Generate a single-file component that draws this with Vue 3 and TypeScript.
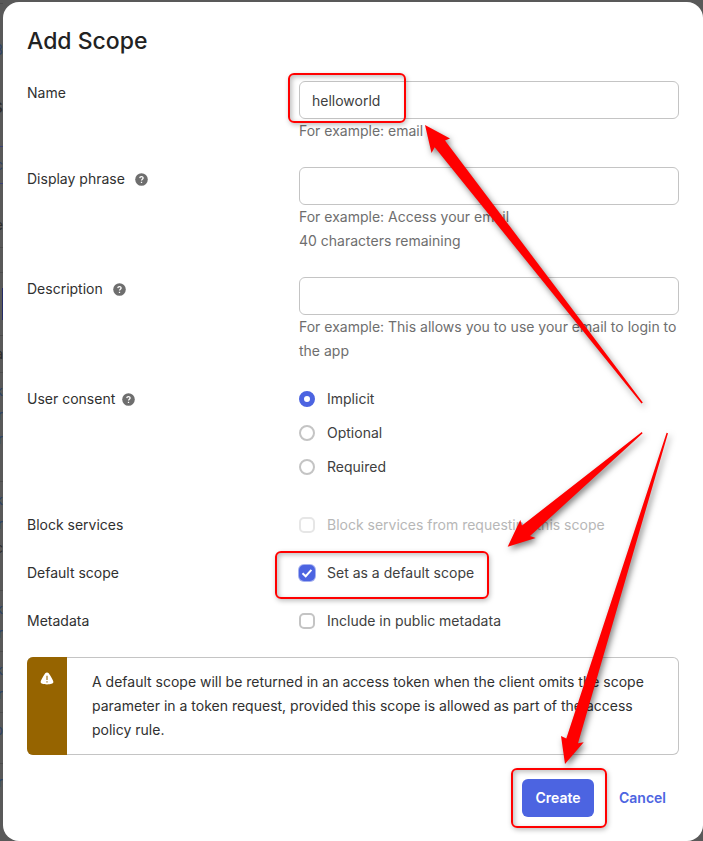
<script setup lang="ts">
import { ref } from 'vue'

interface TextField {
  id: string
  label: string
  help: boolean
  marked: boolean
  hints: string[]
}

interface CheckField {
  id: string
  label: string
  text: string
  disabled: boolean
  marked: boolean
}

interface Fragment {
  text: string
  top: number
  kind: 'plain' | 'link' | 'heading'
}

const textFields: TextField[] = [
  { id: 'name', label: 'Name', help: false, marked: true, hints: ['For example: email'] },
  { id: 'phrase', label: 'Display phrase', help: true, marked: false, hints: ['For example: Access your email', '40 characters remaining'] },
  { id: 'description', label: 'Description', help: true, marked: false, hints: ['For example: This allows you to use your email to login to the app'] },
]

const checkFields: CheckField[] = [
  { id: 'block', label: 'Block services', text: 'Block services from requesting this scope', disabled: true, marked: false },
  { id: 'default', label: 'Default scope', text: 'Set as a default scope', disabled: false, marked: true },
  { id: 'metadata', label: 'Metadata', text: 'Include in public metadata', disabled: false, marked: false },
]

const consentOptions = ['Implicit', 'Optional', 'Required']

const values = ref<Record<string, string>>({ name: 'helloworld', phrase: '', description: '' })
const checks = ref<Record<string, boolean>>({ block: false, default: true, metadata: false })
const consent = ref('Implicit')

// Edge of the dimmed page that shows beside the dialog
const fragments: Fragment[] = [
  { text: '3', top: 40, kind: 'link' },
  { text: 's', top: 94, kind: 'heading' },
  { text: 'c', top: 155, kind: 'link' },
  { text: 'e', top: 215, kind: 'plain' },
  { text: 'a', top: 344, kind: 'plain' },
  { text: 'k', top: 381, kind: 'link' },
  { text: 'r', top: 405, kind: 'link' },
  { text: 'r', top: 429, kind: 'link' },
  { text: 'k', top: 490, kind: 'link' },
  { text: 'r', top: 514, kind: 'link' },
  { text: 'c', top: 538, kind: 'plain' },
  { text: 'k', top: 599, kind: 'link' },
  { text: 'r', top: 623, kind: 'link' },
  { text: 'k', top: 660, kind: 'link' },
  { text: 'r', top: 684, kind: 'link' },
  { text: 'p', top: 720, kind: 'link' },
  { text: 'r', top: 772, kind: 'link' },
]
const rules = [3, 247, 272, 335, 372, 481, 590, 651, 712, 763]
</script>

<template>
  <div class="page">
    <div class="behind" aria-hidden="true">
      <span v-for="y in rules" :key="y" class="rule" :style="{ top: y + 'px' }"></span>
      <span class="tab"></span>
      <span class="block"></span>
      <span v-for="f in fragments" :key="f.top" class="fragment" :class="f.kind" :style="{ top: f.top + 'px' }">{{ f.text }}</span>
    </div>

    <form class="dialog" role="dialog" aria-labelledby="dialog-title" @submit.prevent>
      <h1 id="dialog-title">Add Scope</h1>

      <div v-for="f in textFields" :key="f.id" class="row">
        <div class="label">
          <label :for="f.id">{{ f.label }}</label>
          <button v-if="f.help" type="button" class="help" :aria-label="'Help: ' + f.label">
            <svg viewBox="0 0 13 13"><circle cx="6.5" cy="6.5" r="6.3" fill="#6e6e6e" /><path d="M4.8 5.1C4.9 3.1 8.2 3.2 8.1 5.1C8 6.3 6.5 6.2 6.5 7.6M6.5 8.7V9.9" fill="none" stroke="#fff" stroke-width="1.3" /></svg>
          </button>
        </div>
        <div class="control">
          <input :id="f.id" v-model="values[f.id]" class="text" type="text" autocomplete="off" />
          <p v-for="h in f.hints" :key="h" class="hint">{{ h }}</p>
          <span v-if="f.marked" class="mark mark-name"></span>
        </div>
      </div>

      <div class="row" role="radiogroup" aria-labelledby="consent-label">
        <div class="label tight">
          <span id="consent-label">User consent</span>
          <button type="button" class="help" aria-label="Help: User consent">
            <svg viewBox="0 0 13 13"><circle cx="6.5" cy="6.5" r="6.3" fill="#6e6e6e" /><path d="M4.8 5.1C4.9 3.1 8.2 3.2 8.1 5.1C8 6.3 6.5 6.2 6.5 7.6M6.5 8.7V9.9" fill="none" stroke="#fff" stroke-width="1.3" /></svg>
          </button>
        </div>
        <div class="control options">
          <label v-for="o in consentOptions" :key="o" class="choice">
            <input v-model="consent" class="radio" type="radio" name="consent" :value="o" />
            <span>{{ o }}</span>
          </label>
        </div>
      </div>

      <div class="checks">
        <div v-for="c in checkFields" :key="c.id" class="row">
          <span class="label">{{ c.label }}</span>
          <div class="control">
            <label class="choice" :class="{ disabled: c.disabled }">
              <span class="box">
                <input v-model="checks[c.id]" type="checkbox" :disabled="c.disabled" />
                <svg v-if="checks[c.id]" viewBox="0 0 16 16"><path d="M3.5 8.2L6.7 11.2L12.4 4.8" fill="none" stroke="#fff" stroke-width="2" /></svg>
              </span>
              <span>{{ c.text }}</span>
            </label>
            <span v-if="c.marked" class="mark mark-default"></span>
          </div>
        </div>
      </div>

      <div class="notice" role="note">
        <div class="notice-side">
          <svg viewBox="0 0 14 13"><path d="M7 .4C8.4.4 9.2 1.6 10.4 3.8C11.7 6.2 13.3 8.8 13.4 10.1C13.5 11.5 10.5 12.5 7 12.5S.5 11.5.6 10.1C.7 8.8 2.3 6.2 3.6 3.8C4.8 1.6 5.6.4 7 .4Z" fill="#fff" /><path d="M7 3.8V8M7 9.2V10.5" stroke="#966400" stroke-width="1.1" /></svg>
        </div>
        <p>A default scope will be returned in an access token when the client omits the scope parameter in a token request, provided this scope is allowed as part of the access policy rule.</p>
      </div>

      <div class="actions">
        <div class="primary-wrap">
          <button type="submit" class="primary">Create</button>
          <span class="mark mark-create"></span>
        </div>
        <button type="button" class="cancel">Cancel</button>
      </div>
    </form>

    <svg class="arrows" viewBox="0 0 703 841" aria-hidden="true">
      <path d="M425 125L450 138.5L445 140.5L642.8 402.5L641.5 403.5L434.7 147.3L431.5 153Z" />
      <path d="M507.7 546.7L520.3 520L522 525.5L641.8 432L642.6 433.2L530 536L535.7 538Z" />
      <path d="M565 764L561 736L566.3 738.5L666.6 432.7L668 433.2L578 743.3L583.7 742.3Z" />
    </svg>
  </div>
</template>

<style>
body {
  margin: 0;
  background: #595959;
}
</style>

<style scoped>
.page {
  position: relative;
  min-height: 100vh;
  box-sizing: border-box;
  padding: 2px 0 0 3px;
  overflow: hidden;
  font-family: Inter, "Liberation Sans", sans-serif;
  font-size: 14px;
  line-height: 24px;
  color: #303030;
}

.behind {
  position: absolute;
  top: 0;
  bottom: 0;
  left: 0;
  width: 3px;
  overflow: hidden;
}

.rule,
.tab,
.block,
.fragment {
  position: absolute;
  right: 0;
}

.rule {
  width: 3px;
  height: 1px;
  background: #4c4c4c;
}

.tab {
  top: 146px;
  width: 3px;
  height: 36px;
  border: solid #3a4274;
  border-width: 1px 0;
}

.block {
  top: 288px;
  width: 1px;
  height: 32px;
  background: #252c66;
}

.fragment {
  line-height: 20px;
  color: #2c2c2c;
}

.fragment.link {
  color: #2c4266;
}

.fragment.heading {
  font-size: 20px;
  line-height: 24px;
}

.dialog {
  position: relative;
  box-sizing: border-box;
  padding: 24px;
  border-radius: 16px;
  background: #fff;
}

h1 {
  margin: 0 0 24px;
  font-size: 23px;
  font-weight: 500;
  line-height: 31px;
  color: #222;
}

.row {
  display: grid;
  grid-template-columns: 272px minmax(0, 1fr);
  margin-bottom: 24px;
}

.label {
  display: flex;
  align-items: center;
  gap: 10px;
  height: 24px;
}

.label.tight {
  gap: 7px;
}

.help {
  display: flex;
  width: 13px;
  height: 13px;
  padding: 0;
  border: 0;
  background: none;
}

.help svg {
  width: 13px;
  height: 13px;
}

.control {
  position: relative;
}

.text {
  display: block;
  box-sizing: border-box;
  width: 100%;
  height: 38px;
  padding: 0 12px;
  border: 1px solid #c4c4c4;
  border-radius: 6px;
  background: #fff;
  font: inherit;
  color: #404040;
  outline: none;
}

.hint {
  margin: 0;
  color: #6e6e6e;
}

.options {
  display: grid;
  gap: 10px;
  margin-bottom: 10px;
}

.choice {
  display: flex;
  align-items: center;
  gap: 12px;
  color: #404040;
}

.choice.disabled {
  color: #b7b7b7;
}

.radio {
  appearance: none;
  box-sizing: border-box;
  width: 16px;
  height: 16px;
  margin: 0;
  border: 2px solid #c4c4c4;
  border-radius: 50%;
  background: #fff;
}

.radio:checked {
  border: 5px solid #4c64e1;
}

.box {
  display: grid;
  width: 16px;
  height: 16px;
}

.box input,
.box svg {
  grid-area: 1 / 1;
  width: 16px;
  height: 16px;
}

.box svg {
  pointer-events: none;
  z-index: 1;
}

.box input {
  appearance: none;
  box-sizing: border-box;
  margin: 0;
  border: 2px solid #c4c4c4;
  border-radius: 5px;
  background: #fff;
}

.box input:checked {
  border-color: #4c64e1;
  background: #4c64e1;
  box-shadow: 0 0 0 1px rgba(76, 100, 225, 0.5);
}

.box input:disabled {
  border-color: #e6e6e6;
}

.notice {
  display: flex;
  border: 1px solid #c4c4c4;
  border-left: 0;
  border-radius: 6px;
}

.notice-side {
  display: flex;
  justify-content: center;
  flex: none;
  box-sizing: border-box;
  width: 40px;
  margin: -1px 0;
  padding-top: 15px;
  border-radius: 6px 0 0 6px;
  background: #966400;
}

.notice-side svg {
  width: 14px;
  height: 13px;
}

.notice p {
  margin: 0;
  padding: 12px 25px;
}

.actions {
  display: flex;
  justify-content: flex-end;
  align-items: center;
  gap: 12px;
  margin-top: 24px;
}

.primary-wrap {
  position: relative;
}

.primary,
.cancel {
  height: 38px;
  padding: 0 13px;
  border: 0;
  border-radius: 6px;
  background: none;
  font: inherit;
  font-weight: 600;
  color: #4c64e1;
}

.primary {
  display: block;
  min-width: 72px;
  background: #4c64e1;
  color: #fff;
}

.mark {
  position: absolute;
  box-sizing: border-box;
  border: 2px solid #f00;
  border-radius: 6px;
  box-shadow: 1px 2px 5px rgba(0, 0, 0, 0.25), inset 2px 2px 5px rgba(0, 0, 0, 0.25);
  pointer-events: none;
}

.mark-name {
  top: -8px;
  left: -11px;
  width: 118px;
  height: 50px;
}

.mark-default {
  top: -10px;
  left: -24px;
  width: 214px;
  height: 48px;
}

.mark-create {
  top: -11px;
  right: -13px;
  bottom: -11px;
  left: -11px;
}

.arrows {
  position: absolute;
  top: 0;
  left: 0;
  width: 703px;
  height: 841px;
  pointer-events: none;
  fill: #f00;
  filter: drop-shadow(2px 3px 3px rgba(0, 0, 0, 0.5));
}
</style>
